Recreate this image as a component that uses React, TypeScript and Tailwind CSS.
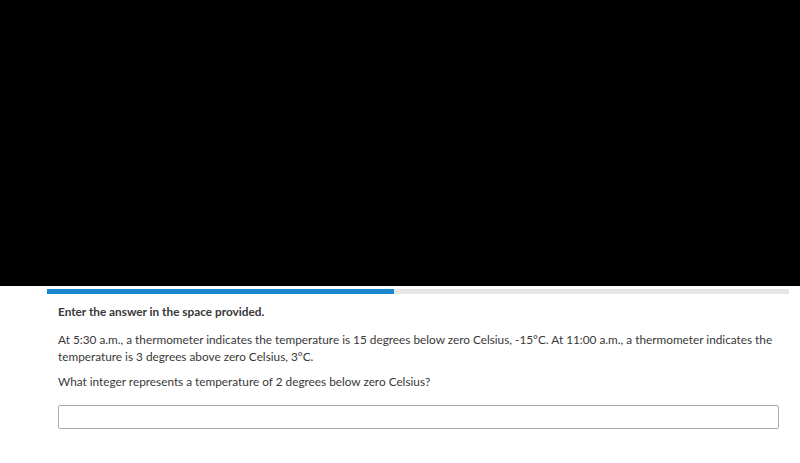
export default function App() {
  return (
    <div className="w-[800px] h-[463px] bg-white overflow-hidden" style={{ fontFamily: "Lato, 'Noto Sans', sans-serif" }}>
      <div className="h-[286px] bg-black" />
      <div className="pt-[3px] pl-[47px]">
        <div className="w-[742px] h-[5px] bg-[#e6e6e6] flex">
          <div className="w-[347px] h-full bg-[#1a86d0]" />
        </div>
      </div>
      <div className="pl-[58px] pr-[21px] text-[11.8px] leading-[17px] text-[#383838]">
        <p className="mt-[9px] font-bold">Enter the answer in the space provided.</p>
        <p className="mt-[11px]">
          At 5:30 a.m., a thermometer indicates the temperature is 15 degrees below zero Celsius, -15°C. At 11:00 a.m., a thermometer indicates the temperature is 3 degrees above zero Celsius, 3°C.
        </p>
        <p className="mt-[8px]">What integer represents a temperature of 2 degrees below zero Celsius?</p>
        <div className="mt-[15px] h-[24px] border border-[#aaa] rounded-[2px] bg-white" />
      </div>
    </div>
  );
}
